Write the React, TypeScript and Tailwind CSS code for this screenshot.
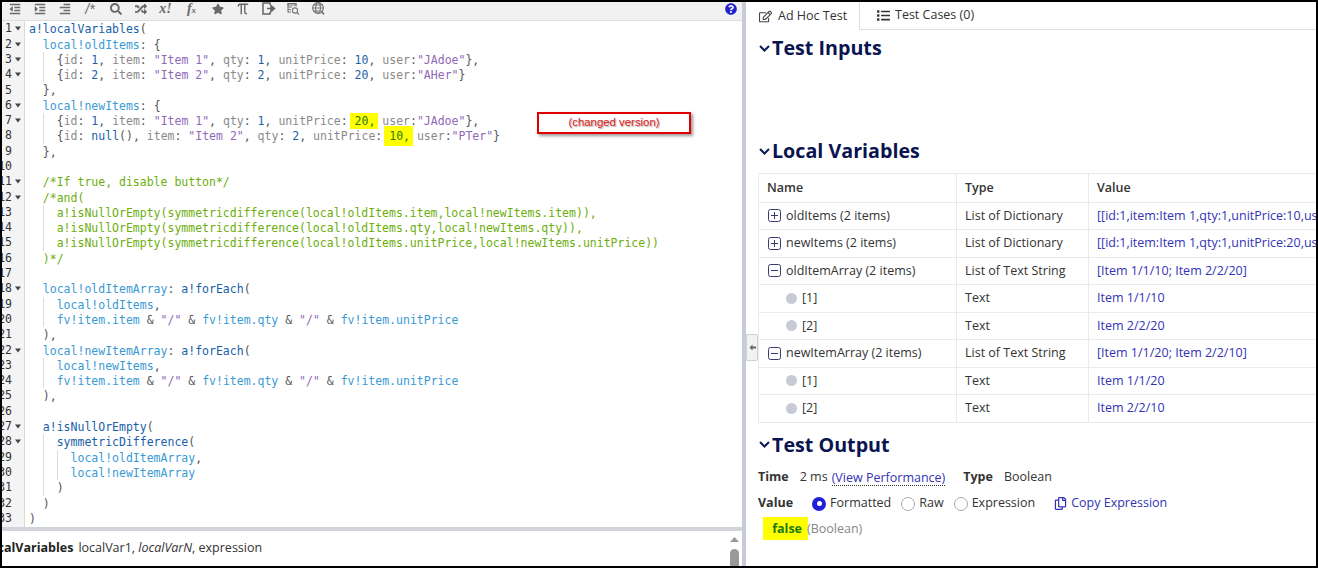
import React from "react";
import { FaOutdent, FaIndent, FaSearch, FaRandom, FaStar, FaQuestionCircle, FaRegEdit, FaList, FaRegCopy, FaAlignRight } from "react-icons/fa";
import { Pi } from "lucide-react";

type Tok = [string, string];
type Line = { i: number; g?: number[]; t: Tok[]; fold?: boolean };

const colors: Record<string, string> = {
  k: "text-[#8a8a8a]",
  s: "text-[#9068b8]",
  n: "text-[#1c5fa8]",
  v: "text-[#3a9ad4]",
  f: "text-[#1760a8]",
  c: "text-[#6cae0c]",
  p: "text-[#555555]",
  h: "text-[#2a7a1a] bg-[#ffff00] pl-[5px] pr-[3px] -ml-[5px] -mr-[3px] py-[1px]",
  j: "text-[#2a7a1a] bg-[#ffff00] pl-[5px] pr-[3px] -ml-[5px] -mr-[3px] py-[3px]",
};

const rec = (id: Tok[], item: string, q: string, price: Tok, user: string, bare = false): Tok[] => [
  ["p", "{"], ["k", "id"], ["p", ":"], ...id, ["p", ","], ["k", " item"], ["p", ": "], ["s", `"${item}"`], ["p", ","],
  ["k", " qty"], ["p", ": "], ["n", q], ["p", ","], ["k", " unitPrice"], ["p", ": "], price,
  ...(price[0] === "n" ? ([["p", ","]] as Tok[]) : []),
  ["k", " user"], ["p", ":"], ["s", `"${user}"`], ["p", bare ? "}" : "},"],
];

const forEachBody = (name: string): Line[] => [
  { i: 2, g: [1], t: [["v", name], ["p", ","]] },
  { i: 2, g: [1], t: [["v", "fv!item.item"], ["p", " & "], ["s", '"/"'], ["p", " & "], ["v", "fv!item.qty"], ["p", " & "], ["s", '"/"'], ["p", " & "], ["v", "fv!item.unitPrice"]] },
  { i: 1, t: [["p", "),"]] },
];

const lines: Line[] = [
  { i: 0, fold: true, t: [["f", "a!localVariables"], ["p", "("]] },
  { i: 1, fold: true, t: [["v", "local!oldItems"], ["p", ": {"]] },
  { i: 2, g: [1], fold: true, t: rec([["n", " 1"]], "Item 1", "1", ["n", "10"], "JAdoe") },
  { i: 2, g: [1], fold: true, t: rec([["n", " 2"]], "Item 2", "2", ["n", "20"], "AHer", true) },
  { i: 1, t: [["p", "},"]] },
  { i: 1, fold: true, t: [["v", "local!newItems"], ["p", ": {"]] },
  { i: 2, g: [1], fold: true, t: rec([["n", " 1"]], "Item 1", "1", ["h", "20,"], "JAdoe") },
  { i: 2, g: [1], t: rec([["p", " "], ["f", "null"], ["p", "()"]], "Item 2", "2", ["j", "10,"], "PTer", true) },
  { i: 1, t: [["p", "},"]] },
  { i: 0, t: [] },
  { i: 1, fold: true, t: [["c", "/*If true, disable button*/"]] },
  { i: 1, fold: true, t: [["c", "/*and("]] },
  { i: 2, g: [1], t: [["c", "a!isNullOrEmpty(symmetricdifference(local!oldItems.item,local!newItems.item)),"]] },
  { i: 2, g: [1], t: [["c", "a!isNullOrEmpty(symmetricdifference(local!oldItems.qty,local!newItems.qty)),"]] },
  { i: 2, g: [1], t: [["c", "a!isNullOrEmpty(symmetricdifference(local!oldItems.unitPrice,local!newItems.unitPrice))"]] },
  { i: 1, t: [["c", ")*/"]] },
  { i: 0, t: [] },
  { i: 1, fold: true, t: [["v", "local!oldItemArray"], ["p", ": "], ["f", "a!forEach"], ["p", "("]] },
  ...forEachBody("local!oldItems"),
  { i: 1, fold: true, t: [["v", "local!newItemArray"], ["p", ": "], ["f", "a!forEach"], ["p", "("]] },
  ...forEachBody("local!newItems"),
  { i: 0, t: [] },
  { i: 1, fold: true, t: [["f", "a!isNullOrEmpty"], ["p", "("]] },
  { i: 2, g: [1], fold: true, t: [["f", "symmetricDifference"], ["p", "("]] },
  { i: 3, g: [1, 2], t: [["v", "local!oldItemArray"], ["p", ","]] },
  { i: 3, g: [1, 2], t: [["v", "local!newItemArray"]] },
  { i: 2, g: [1], t: [["p", ")"]] },
  { i: 1, t: [["p", ")"]] },
  { i: 0, t: [["p", ")"]] },
];

function Fold() {
  return (
    <svg width="6" height="5" viewBox="0 0 6 5" className="ml-[3px] shrink-0">
      <path d="M0 0.5H6L3 4.5Z" fill="#444" />
    </svg>
  );
}

function Gutter() {
  return (
    <div className="w-[23px] shrink-0 overflow-hidden border-r border-[#d9d9d9] bg-[#f4f4f4] text-[#333]">
      {lines.map((l, n) => (
        <div key={n} className="flex h-[15.3px] items-center">
          <div className="flex w-[10px] shrink-0 justify-end">
            <span className="shrink-0">{n + 1}</span>
          </div>
          {l.fold && <Fold />}
        </div>
      ))}
    </div>
  );
}

function Code() {
  return (
    <div className="min-w-0 flex-1 pl-[4px]">
      {lines.map((l, n) => (
        <div key={n} className="h-[15.3px] whitespace-pre">
          {Array.from({ length: l.i }).map((_, lv) => (
            <span
              key={lv}
              className={
                l.g && l.g.includes(lv)
                  ? "inline-block h-[15.3px] w-[2ch] border-l border-[#dcdcdc] align-top"
                  : "inline-block h-[15.3px] w-[2ch] align-top"
              }
            />
          ))}
          {l.t.map((t, m) => (
            <span key={m} className={colors[t[0]]}>
              {t[1]}
            </span>
          ))}
        </div>
      ))}
    </div>
  );
}

function TableSearch() {
  return (
    <svg width="13" height="14" viewBox="0 0 13 14" fill="none" stroke="#777" strokeWidth="1.1">
      <path d="M1 1.5h8v1.5h-8zM1 5h4M1 7.5h3M1 10h3" />
      <path d="M1 1.5v9M9 1.5v3" />
      <circle cx="8" cy="8.5" r="2.6" />
      <path d="M10 10.5l2 2" />
    </svg>
  );
}

function GlobeSearch() {
  return (
    <svg width="15" height="14" viewBox="0 0 15 14" fill="none" stroke="#777" strokeWidth="1.1">
      <circle cx="7" cy="6" r="5.4" />
      <ellipse cx="7" cy="6" rx="2.4" ry="5.4" />
      <path d="M1.6 6h10.8M2.4 3h9.2M2.4 9h9.2" />
      <path d="M10.5 9.5l2.5 2.8" strokeWidth="1.8" />
    </svg>
  );
}

function ExitIcon() {
  return (
    <svg width="14" height="13" viewBox="0 0 14 13" fill="none" stroke="#666" strokeWidth="1.5">
      <path d="M8 3V1H1v11h7v-2" />
      <path d="M5 6.5h5M9 3.5l3.5 3-3.5 3z" fill="#666" />
    </svg>
  );
}

function ToolSlot({ w, children }: { w: string; children: React.ReactNode }) {
  return <div className={`flex shrink-0 items-center justify-center ${w}`}>{children}</div>;
}

function Toolbar() {
  return (
    <div className="relative flex h-[19px] shrink-0 items-start overflow-hidden border-b border-[#dddddd] bg-[#f1f1f1] text-[#6a6a6a]">
      <div className="flex h-[13px] items-center">
        <ToolSlot w="w-[25px]"><FaOutdent size={12} /></ToolSlot>
        <ToolSlot w="w-[25px]"><FaIndent size={12} /></ToolSlot>
        <ToolSlot w="w-[25px]"><FaAlignRight size={12} /></ToolSlot>
        <ToolSlot w="w-[26px]"><span className="font-['Liberation_Sans',sans-serif] text-[14px] italic leading-none">/*</span></ToolSlot>
        <ToolSlot w="w-[25px]"><FaSearch size={12} /></ToolSlot>
        <ToolSlot w="w-[25px]"><FaRandom size={12} /></ToolSlot>
        <ToolSlot w="w-[25px]"><span className="font-['Liberation_Serif',serif] text-[14px] font-bold italic leading-none">x!</span></ToolSlot>
        <ToolSlot w="w-[27px]"><span className="font-['Liberation_Serif',serif] text-[14px] font-bold italic leading-none">f<span className="text-[9px]">x</span></span></ToolSlot>
        <ToolSlot w="w-[25px]"><FaStar size={12} /></ToolSlot>
        <ToolSlot w="w-[26px]"><Pi size={14} strokeWidth={2.5} /></ToolSlot>
        <ToolSlot w="w-[25px]"><ExitIcon /></ToolSlot>
        <ToolSlot w="w-[25px]"><TableSearch /></ToolSlot>
        <ToolSlot w="w-[25px]"><GlobeSearch /></ToolSlot>
      </div>
      <FaQuestionCircle size={12} className="absolute right-[5px] top-[1px] text-[#2222cc]" />
    </div>
  );
}

function Chevron() {
  return (
    <svg width="11" height="7" viewBox="0 0 11 7" fill="none" stroke="#0d1a55" strokeWidth="2" className="shrink-0">
      <path d="M1 1l4.5 4.5L10 1" />
    </svg>
  );
}

function Heading({ children, className }: { children: string; className: string }) {
  return (
    <div className={`flex h-[28px] items-center gap-[2px] pl-[11px] ${className}`}>
      <Chevron />
      <span className="text-[19.7px] font-bold leading-none text-[#0a1450]">{children}</span>
    </div>
  );
}

function Box({ minus }: { minus?: boolean }) {
  return (
    <svg width="13" height="13" viewBox="0 0 13 13" fill="none" stroke="#3a3a70" strokeWidth="1" className="shrink-0">
      <rect x="0.5" y="0.5" width="12" height="12" rx="2" />
      <path d={minus ? "M3 6.5h7" : "M3 6.5h7M6.5 3v7"} />
    </svg>
  );
}

type Row = { name: string; type: string; value: string; kind: "plus" | "minus" | "dot" };
const rows: Row[] = [
  { name: "oldItems (2 items)", type: "List of Dictionary", value: "[[id:1,item:Item 1,qty:1,unitPrice:10,user:JAdoe]; [id:2,item:Item 2,qty:2,unitPrice:20,user:AHer]]", kind: "plus" },
  { name: "newItems (2 items)", type: "List of Dictionary", value: "[[id:1,item:Item 1,qty:1,unitPrice:20,user:JAdoe]; [id:,item:Item 2,qty:2,unitPrice:10,user:PTer]]", kind: "plus" },
  { name: "oldItemArray (2 items)", type: "List of Text String", value: "[Item 1/1/10; Item 2/2/20]", kind: "minus" },
  { name: "[1]", type: "Text", value: "Item 1/1/10", kind: "dot" },
  { name: "[2]", type: "Text", value: "Item 2/2/20", kind: "dot" },
  { name: "newItemArray (2 items)", type: "List of Text String", value: "[Item 1/1/20; Item 2/2/10]", kind: "minus" },
  { name: "[1]", type: "Text", value: "Item 1/1/20", kind: "dot" },
  { name: "[2]", type: "Text", value: "Item 2/2/10", kind: "dot" },
];

function VarTable() {
  return (
    <div className="ml-[10px] mt-[8px] w-[760px] border border-[#eaeaea] text-[12.5px] leading-none text-[#333]">
      <div className="grid h-[27.5px] grid-cols-[198px_132px_1fr] items-stretch font-semibold">
        <div className="flex items-center border-r border-[#eaeaea] pl-[8px]">Name</div>
        <div className="flex items-center border-r border-[#eaeaea] pl-[8px]">Type</div>
        <div className="flex items-center pl-[8px]">Value</div>
      </div>
      {rows.map((r, i) => (
        <div key={i} className="grid h-[27.5px] grid-cols-[198px_132px_1fr] border-t border-[#eaeaea]">
          <div className={r.kind === "dot" ? "flex items-center gap-[5px] border-r border-[#eaeaea] pl-[27px]" : "flex items-center gap-[5px] border-r border-[#eaeaea] pl-[9px]"}>
            {r.kind === "dot" ? <span className="h-[11px] w-[11px] rounded-full bg-[#c8cad6]" /> : <Box minus={r.kind === "minus"} />}
            <span>{r.name}</span>
          </div>
          <div className="flex items-center border-r border-[#eaeaea] pl-[8px]">{r.type}</div>
          <div className="flex items-center overflow-hidden whitespace-nowrap pl-[8px] text-[#3333b5]">{r.value}</div>
        </div>
      ))}
    </div>
  );
}

function Radio({ on, label, mr }: { on?: boolean; label: string; mr: string }) {
  return (
    <div className={`flex items-center gap-[4px] ${mr}`}>
      {on ? (
        <span className="flex h-[14px] w-[14px] items-center justify-center rounded-full bg-[#2020d8]">
          <span className="h-[5px] w-[5px] rounded-full bg-white" />
        </span>
      ) : (
        <span className="h-[14px] w-[14px] rounded-full border border-[#aaaaaa] bg-white" />
      )}
      <span>{label}</span>
    </div>
  );
}

export default function App() {
  return (
    <div className="h-[568px] w-[1318px] overflow-hidden bg-black pb-[2px] pl-[2px] pr-[2px] pt-[2px] font-['Open_Sans',sans-serif]">
      <div className="relative flex h-full w-full overflow-hidden bg-white">
        {/* left editor */}
        <div className="flex h-full w-[740px] shrink-0 flex-col">
          <Toolbar />
          <div className="relative min-h-0 flex-1 overflow-hidden pt-[0.3px] font-['DejaVu_Sans_Mono',monospace] text-[11.5px]">
            <div className="flex h-full">
              <Gutter />
              <Code />
            </div>
            <div className="absolute left-[535px] top-[91px] flex h-[22px] w-[154px] items-center justify-center border-2 border-[#e00000] bg-white font-['Liberation_Sans',sans-serif] text-[11.4px] text-[#e02020] shadow-[2px_2px_3px_#999] [text-shadow:1px_1px_1px_#aaa]">
              (changed version)
            </div>
          </div>
          <div className="h-[4px] shrink-0 bg-[#d0d3da]" />
          <div className="relative flex h-[35px] shrink-0 items-center overflow-hidden text-[12.5px] text-[#333]">
            <span className="-ml-[16px] mr-[5px] font-bold text-[#222]">localVariables</span>
            <span>localVar1, <i>localVarN</i>, expression</span>
            <svg width="9" height="5" viewBox="0 0 9 5" className="absolute right-[3px] top-[6px]">
              <path d="M0 5L4.5 0L9 5Z" fill="#999" />
            </svg>
            <div className="absolute right-[3px] top-[18px] h-[20px] w-[9px] rounded-t-[5px] bg-[#999]" />
          </div>
        </div>

        {/* divider */}
        <div className="h-full w-[4px] shrink-0 bg-[#c8ccd8]" />

        {/* collapse handle */}
        <div className="absolute left-[744px] top-[332px] flex h-[27px] w-[12px] items-center justify-center rounded-r-[2px] border border-[#ccd0da] bg-[#f2f2f2] text-[#666]">
          <svg width="7" height="7" viewBox="0 0 7 7"><path d="M3.5 0.5L0.5 3.5L3.5 6.5V4.5H7V2.5H3.5Z" fill="#666" /></svg>
        </div>

        {/* right panel */}
        <div className="min-w-0 flex-1 overflow-hidden pl-[2px]">
          <div className="-ml-[2px] flex h-[28px] border-b border-[#dddddd] text-[12.5px] text-[#333]">
            <div className="-mb-[1px] flex h-[28px] w-[114px] items-center gap-[6px] border-r border-[#dddddd] bg-white pl-[13px]">
              <FaRegEdit size={13} className="text-[#444]" />
              <span>Ad Hoc Test</span>
            </div>
            <div className="flex items-center gap-[5px] pl-[17px]">
              <FaList size={13} className="text-[#333]" />
              <span>Test Cases (0)</span>
            </div>
          </div>
          <Heading className="mt-[4px]">Test Inputs</Heading>
          <Heading className="mt-[75px]">Local Variables</Heading>
          <VarTable />
          <Heading className="mt-[8px]">Test Output</Heading>
          <div className="ml-[10px] mt-[9px] flex h-[20px] items-center text-[12.5px] text-[#333]">
            <span className="mr-[11px] font-bold">Time</span>
            <span className="mr-[4px]">2 ms</span>
            <span className="border-b border-dotted border-[#333] leading-[15px] text-[#3333b5]">(View Performance)</span>
            <span className="ml-[18px] mr-[11px] font-bold">Type</span>
            <span>Boolean</span>
          </div>
          <div className="ml-[10px] mt-[6px] flex h-[20px] items-center text-[12.5px] text-[#333]">
            <span className="mr-[19px] font-bold">Value</span>
            <Radio on label="Formatted" mr="mr-[10px]" />
            <Radio label="Raw" mr="mr-[10px]" />
            <Radio label="Expression" mr="mr-[19px]" />
            <FaRegCopy size={13} className="mr-[4px] text-[#3333b5]" />
            <span className="text-[#3333b5]">Copy Expression</span>
          </div>
          <div className="ml-[15px] mt-[3px] flex h-[23px] items-center text-[12.5px]">
            <span className="flex h-[23px] w-[45px] items-center justify-end bg-[#ffff00] pr-[6px] pt-[3px] font-bold text-[#1a7a10]">false</span>
            <span className="ml-[-1px] pt-[3px] text-[#888]">(Boolean)</span>
          </div>
        </div>
      </div>
    </div>
  );
}
